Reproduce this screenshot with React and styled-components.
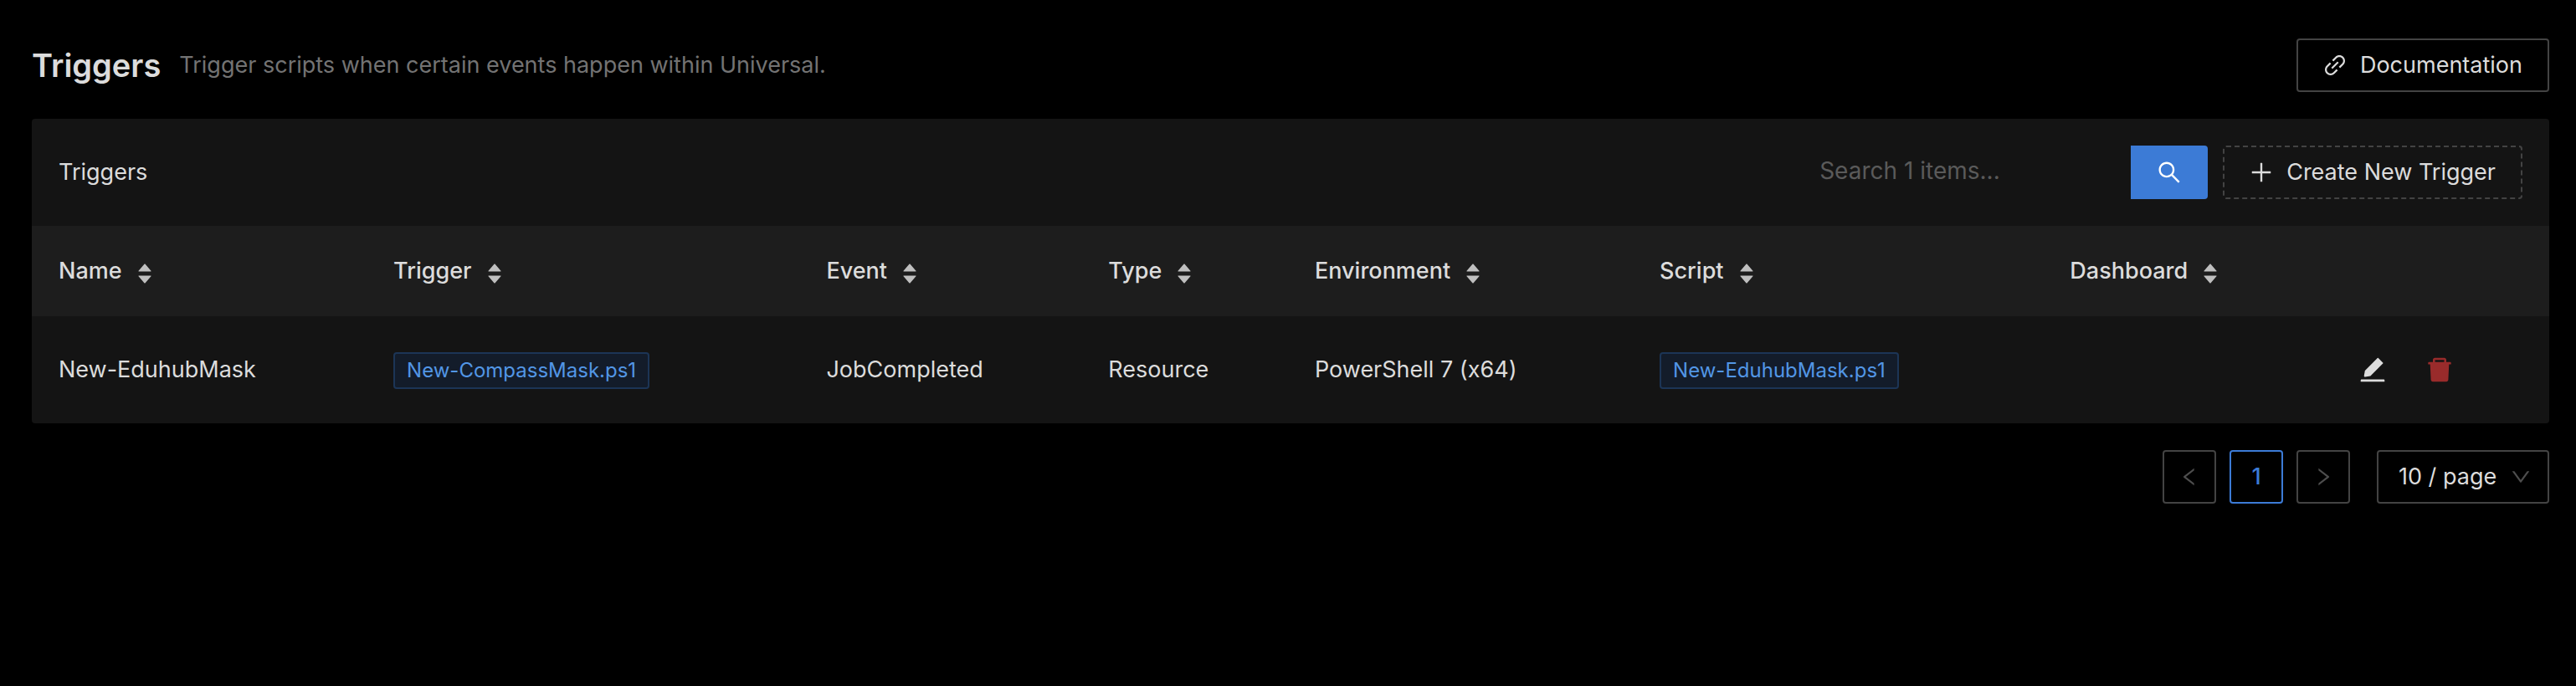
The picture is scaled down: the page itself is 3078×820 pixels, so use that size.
import styled, { createGlobalStyle, css } from "styled-components";
import {
  AiFillCaretDown,
  AiFillCaretUp,
  AiFillDelete,
  AiFillEdit,
  AiOutlineDown,
  AiOutlineLeft,
  AiOutlineLink,
  AiOutlinePlus,
  AiOutlineRight,
  AiOutlineSearch,
} from "react-icons/ai";

// trims the empty margin that the icon set leaves around its glyphs
const tight = "64 64 896 896";

const columns = [
  { title: "Name", width: "13.3%" },
  { title: "Trigger", width: "17.2%" },
  { title: "Event", width: "11.2%" },
  { title: "Type", width: "8.2%" },
  { title: "Environment", width: "13.7%" },
  { title: "Script", width: "16.3%" },
  { title: "Dashboard", width: "11.5%" },
];

const triggers = [
  {
    name: "New-EduhubMask",
    trigger: "New-CompassMask.ps1",
    event: "JobCompleted",
    type: "Resource",
    environment: "PowerShell 7 (x64)",
    script: "New-EduhubMask.ps1",
    dashboard: "",
  },
];

const GlobalStyle = createGlobalStyle`
  * {
    box-sizing: border-box;
  }

  body {
    margin: 0;
    background: #000;
    color: #dcdcdc;
    font-family: Inter, "Liberation Sans", sans-serif;
    font-size: 27px;
    line-height: 44px;
  }

  button, input, select {
    font: inherit;
    color: inherit;
  }

  svg {
    display: block;
    flex: none;
  }
`;

const Page = styled.main`
  padding: 46px 32px 32px 38px;
`;

const PageHeader = styled.header`
  display: flex;
  align-items: center;
  margin-bottom: 32px;
`;

const Title = styled.h1`
  margin: 0 22px 0 0;
  font-size: 38px;
  font-weight: 600;
  line-height: 64px;
`;

const SubTitle = styled.span`
  flex: 1;
  color: #737373;
`;

const outlined = css`
  display: flex;
  align-items: center;
  gap: 16px;
  height: 64px;
  padding: 0 30px;
  border: 2px solid #434343;
  border-radius: 4px;
  background: transparent;
  cursor: pointer;
`;

const LinkButton = styled.a`
  ${outlined}
  color: inherit;
  text-decoration: none;
`;

const DashedButton = styled.button`
  ${outlined}
  border-style: dashed;
`;

const Card = styled.section`
  overflow: hidden;
  border-radius: 4px;
  background: #141414;
`;

const Toolbar = styled.div`
  display: flex;
  align-items: center;
  gap: 18px;
  padding: 32px;
`;

const CardTitle = styled.h2`
  flex: 1;
  margin: 0;
  font-size: inherit;
  font-weight: 400;
`;

const SearchForm = styled.form`
  display: flex;
`;

const SearchInput = styled.input`
  width: 396px;
  height: 64px;
  padding: 0 24px 4px;
  border: 0;
  outline: 0;
  background: transparent;
  font-size: 28px;

  &::placeholder {
    color: #5a5a5a;
    opacity: 1;
  }
`;

const SearchButton = styled.button`
  display: flex;
  align-items: center;
  justify-content: center;
  width: 92px;
  height: 64px;
  padding: 0;
  border: 0;
  border-radius: 0 4px 4px 0;
  background: #3c7bd6;
  color: #fff;
  cursor: pointer;
`;

const Table = styled.table`
  width: 100%;
  table-layout: fixed;
  border-collapse: collapse;
  text-align: left;
`;

const HeadCell = styled.th`
  padding: 32px;
  width: ${({ $width }) => $width};
  background: #1d1d1d;
  font-weight: 500;
`;

const SortButton = styled.button`
  display: flex;
  align-items: center;
  gap: 16px;
  height: 44px;
  padding: 0;
  border: 0;
  background: none;
  cursor: pointer;
`;

const Sorter = styled.span`
  display: flex;
  flex-direction: column;
  padding-top: 6px;
  color: #bfbfbf;

  svg + svg {
    margin-top: -8px;
  }
`;

const Cell = styled.td`
  height: 128px;
  padding: 0 32px;
  white-space: nowrap;
`;

const Tag = styled.a`
  display: inline-block;
  padding: 0 14px;
  border: 2px solid #1c3556;
  border-radius: 4px;
  background: #131c2a;
  color: #5296e5;
  font-size: 24px;
  line-height: 40px;
  text-decoration: none;
  vertical-align: middle;
`;

const Actions = styled.div`
  display: flex;
  gap: 48px;
`;

const IconButton = styled.button`
  padding: 0;
  border: 0;
  background: none;
  color: ${({ $danger }) => ($danger ? "#992b2b" : "#dcdcdc")};
  cursor: pointer;
`;

const Pagination = styled.nav`
  display: flex;
  justify-content: flex-end;
  gap: 16px;
  margin-top: 32px;
`;

const PageButton = styled.button`
  display: flex;
  align-items: center;
  justify-content: center;
  width: 64px;
  height: 64px;
  padding: 0;
  border: 2px solid #434343;
  border-radius: 4px;
  background: transparent;
  color: #4d4d4d;
  cursor: pointer;

  &[aria-current] {
    border-color: #3c7bd6;
    color: #3c7bd6;
    font-weight: 500;
  }

  &[disabled] {
    cursor: not-allowed;
  }
`;

const SizeField = styled.label`
  display: grid;
  align-items: center;
  margin-left: 16px;

  > * {
    grid-area: 1 / 1;
  }

  svg {
    justify-self: end;
    margin-right: 22px;
    color: #4d4d4d;
    pointer-events: none;
  }
`;

const SizeSelect = styled.select`
  width: 206px;
  height: 64px;
  padding: 0 48px 0 24px;
  border: 2px solid #434343;
  border-radius: 4px;
  background: transparent;
  appearance: none;
  cursor: pointer;
`;

function TriggerRow({ item }) {
  return (
    <tr>
      <Cell>{item.name}</Cell>
      <Cell>
        <Tag href="#trigger">{item.trigger}</Tag>
      </Cell>
      <Cell>{item.event}</Cell>
      <Cell>{item.type}</Cell>
      <Cell>{item.environment}</Cell>
      <Cell>
        <Tag href="#script">{item.script}</Tag>
      </Cell>
      <Cell>{item.dashboard}</Cell>
      <Cell>
        <Actions>
          <IconButton type="button" aria-label="Edit">
            <AiFillEdit size={32} viewBox={tight} />
          </IconButton>
          <IconButton type="button" aria-label="Delete" $danger>
            <AiFillDelete size={32} viewBox={tight} />
          </IconButton>
        </Actions>
      </Cell>
    </tr>
  );
}

function App() {
  return (
    <>
      <GlobalStyle />
      <Page>
        <PageHeader>
          <Title>Triggers</Title>
          <SubTitle>
            Trigger scripts when certain events happen within Universal.
          </SubTitle>
          <LinkButton href="#documentation">
            <AiOutlineLink size={28} viewBox={tight} />
            Documentation
          </LinkButton>
        </PageHeader>

        <Card>
          <Toolbar>
            <CardTitle>Triggers</CardTitle>
            <SearchForm role="search" onSubmit={(e) => e.preventDefault()}>
              <SearchInput
                type="text"
                aria-label="Search triggers"
                placeholder="Search 1 items..."
              />
              <SearchButton type="submit" aria-label="Search">
                <AiOutlineSearch size={28} viewBox={tight} />
              </SearchButton>
            </SearchForm>
            <DashedButton type="button">
              <AiOutlinePlus size={28} viewBox={tight} />
              Create New Trigger
            </DashedButton>
          </Toolbar>

          <Table>
            <thead>
              <tr>
                {columns.map(({ title, width }) => (
                  <HeadCell key={title} $width={width} scope="col">
                    <SortButton type="button">
                      {title}
                      <Sorter>
                        <AiFillCaretUp size={22} />
                        <AiFillCaretDown size={22} />
                      </Sorter>
                    </SortButton>
                  </HeadCell>
                ))}
                <HeadCell aria-label="Actions" />
              </tr>
            </thead>
            <tbody>
              {triggers.map((item) => (
                <TriggerRow key={item.name} item={item} />
              ))}
            </tbody>
          </Table>
        </Card>

        <Pagination aria-label="Pagination">
          <PageButton type="button" aria-label="Previous page" disabled>
            <AiOutlineLeft size={24} viewBox={tight} />
          </PageButton>
          <PageButton type="button" aria-current="page">
            1
          </PageButton>
          <PageButton type="button" aria-label="Next page" disabled>
            <AiOutlineRight size={24} viewBox={tight} />
          </PageButton>
          <SizeField>
            <SizeSelect aria-label="Page size" defaultValue="10">
              <option value="10">10 / page</option>
              <option value="20">20 / page</option>
              <option value="50">50 / page</option>
            </SizeSelect>
            <AiOutlineDown size={24} viewBox={tight} />
          </SizeField>
        </Pagination>
      </Page>
    </>
  );
}

export default App;
